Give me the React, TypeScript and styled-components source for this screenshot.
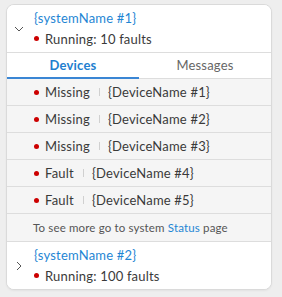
import React, { useState } from "react"
import styled, { createGlobalStyle } from "styled-components"

const GlobalStyle = createGlobalStyle`
  body {
    margin: 0;
    background: #eeeeee;
    font-family: Lato, "Liberation Sans", sans-serif;
    color: #3a3a3a;
  }
`

type Device = { status: string; name: string }

const devices: Device[] = [
  { status: "Missing", name: "{DeviceName #1}" },
  { status: "Missing", name: "{DeviceName #2}" },
  { status: "Missing", name: "{DeviceName #3}" },
  { status: "Fault", name: "{DeviceName #4}" },
  { status: "Fault", name: "{DeviceName #5}" },
]

const Chevron = ({ open }: { open: boolean }) => (
  <svg width="10" height="10" viewBox="0 0 10 10">
    {open ? (
      <path d="M1 3 L5 7 L9 3" fill="none" stroke="#555" strokeWidth="1" />
    ) : (
      <path d="M3 1 L7 5 L3 9" fill="none" stroke="#555" strokeWidth="1" />
    )}
  </svg>
)

const App = () => {
  const [tab, setTab] = useState("devices")
  return (
    <>
      <GlobalStyle />
      <Page>
        <Card>
          <SystemHeader>
            <ChevronCell>
              <Chevron open />
            </ChevronCell>
            <HeaderText>
              <Title>{"{systemName #1}"}</Title>
              <Status>
                <Dot />
                Running: 10 faults
              </Status>
            </HeaderText>
          </SystemHeader>
          <Tabs>
            <Tab active={tab === "devices"} onClick={() => setTab("devices")}>
              Devices
            </Tab>
            <Tab active={tab === "messages"} onClick={() => setTab("messages")}>
              Messages
            </Tab>
          </Tabs>
          {devices.map((d) => (
            <DeviceRow key={d.name}>
              <Dot />
              <span>{d.status}</span>
              <Separator />
              <span>{d.name}</span>
            </DeviceRow>
          ))}
          <Footer>
            To see more go to system <FooterLink>Status</FooterLink> page
          </Footer>
          <SystemHeader bordered>
            <ChevronCell>
              <Chevron open={false} />
            </ChevronCell>
            <HeaderText>
              <Title>{"{systemName #2}"}</Title>
              <Status>
                <Dot />
                Running: 100 faults
              </Status>
            </HeaderText>
          </SystemHeader>
        </Card>
      </Page>
    </>
  )
}

export default App

const Page = styled.div`
  padding: 4px 10px 8px 6px;
  height: 297px;
  box-sizing: border-box;
`
const Card = styled.div`
  width: 266px;
  background: #ffffff;
  border: 1px solid #dadada;
  border-radius: 8px;
  overflow: hidden;
  box-sizing: border-box;
  box-shadow: 0 1px 2px rgba(0, 0, 0, 0.05);
`
const SystemHeader = styled.div<{ bordered?: boolean }>`
  display: flex;
  align-items: center;
  height: 47px;
  border-top: ${(p) => (p.bordered ? "1px solid #dddddd" : "none")};
  background: #ffffff;
`
const ChevronCell = styled.div`
  width: 24px;
  display: flex;
  justify-content: center;
`
const HeaderText = styled.div`
  display: flex;
  flex-direction: column;
  padding-left: 3px;
`
const Title = styled.div`
  color: #1f86d4;
  font-size: 13px;
  line-height: 20px;
  letter-spacing: 0.2px;
`
const Status = styled.div`
  display: flex;
  align-items: center;
  font-size: 13px;
  line-height: 22px;
  letter-spacing: 0.2px;
`
const Dot = styled.span`
  width: 5px;
  height: 5px;
  border-radius: 50%;
  background: #cc0000;
  margin-right: 6px;
  flex-shrink: 0;
`
const Tabs = styled.div`
  display: flex;
  height: 27px;
  border-top: 1px solid #dddddd;
  border-bottom: 1px solid #dddddd;
  box-sizing: border-box;
`
const Tab = styled.div<{ active: boolean }>`
  flex: 1;
  display: flex;
  align-items: center;
  justify-content: center;
  font-size: 13px;
  letter-spacing: 0.2px;
  font-weight: ${(p) => (p.active ? 700 : 400)};
  color: ${(p) => (p.active ? "#1f7fcf" : "#666666")};
  border-bottom: 2px solid ${(p) => (p.active ? "#3a86d4" : "transparent")};
  margin-bottom: -1px;
  cursor: pointer;
`
const DeviceRow = styled.div`
  display: flex;
  align-items: center;
  height: 27px;
  padding-left: 27px;
  background: #f5f5f5;
  border-bottom: 1px solid #dddddd;
  box-sizing: border-box;
  font-size: 13px;
  letter-spacing: 0.2px;
`
const Separator = styled.span`
  width: 1px;
  height: 8px;
  background: #d0d0d0;
  margin: 0 8px 0 9px;
`
const Footer = styled.div`
  display: flex;
  align-items: center;
  height: 27px;
  padding-left: 26px;
  background: #f5f5f5;
  font-size: 11.5px;
  letter-spacing: 0.15px;
  color: #555555;
  white-space: pre;
`
const FooterLink = styled.span`
  color: #1f86d4;
  cursor: pointer;
`
